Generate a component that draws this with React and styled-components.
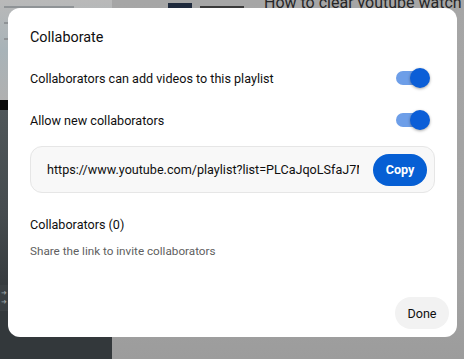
import React from 'react';
import styled, { createGlobalStyle } from 'styled-components';

const GlobalStyle = createGlobalStyle`
	html, body {
		margin: 0;
		padding: 0;
		width: 464px;
		height: 359px;
		overflow: hidden;
		font-family: Roboto, "Liberation Sans", sans-serif;
	}
`;

const Toggle = ({ on }) => (
	<Switch>
		<Track on={on} />
		<Knob on={on} />
	</Switch>
);

const App = () => (
	<Page>
		<GlobalStyle />
		<Sidebar>
			<SideTop>
				<SideLine w={70} />
				<SideLine w={40} />
				<SideLine w={55} />
			</SideTop>
			<SideBand />
			<SideBody />
			<SideFoot>
				<Arrow>➜</Arrow>
				<Arrow>➜</Arrow>
			</SideFoot>
			<SideBottom />
		</Sidebar>
		<Main>
			<MainTop>
				<Thumb />
				<ThumbMeta />
				<VideoTitle>How to clear youtube watch later</VideoTitle>
			</MainTop>
		</Main>

		<Dialog>
			<Title>Collaborate</Title>
			<Row>
				<RowLabel>Collaborators can add videos to this playlist</RowLabel>
				<Toggle on />
			</Row>
			<Row>
				<RowLabel>Allow new collaborators</RowLabel>
				<Toggle on />
			</Row>
			<LinkBox>
				<LinkText>https://www.youtube.com/playlist?list=PLCaJqoLSfaJ7MxQ2</LinkText>
				<CopyButton>Copy</CopyButton>
			</LinkBox>
			<Section>Collaborators (0)</Section>
			<Hint>Share the link to invite collaborators</Hint>
			<Footer>
				<DoneButton>Done</DoneButton>
			</Footer>
		</Dialog>
	</Page>
);

export default App;

const Page = styled.div`
	position: relative;
	display: flex;
	width: 464px;
	height: 359px;
	background: #a4a4a4;
	overflow: hidden;
`;

const Sidebar = styled.div`
	display: flex;
	flex-direction: column;
	width: 112px;
	flex-shrink: 0;
`;

const SideTop = styled.div`
	height: 100px;
	background: linear-gradient(180deg, #b9b9b9 0%, #a8b3b8 50%, #b0b0b0 100%);
	display: flex;
	flex-direction: column;
	gap: 14px;
	padding: 6px 4px;
	box-sizing: border-box;
`;

const SideLine = styled.div`
	height: 2px;
	width: ${props => props.w}px;
	background: #8f9396;
`;

const SideBand = styled.div`
	height: 10px;
	background: #0a0a0a;
`;

const SideBody = styled.div`
	flex: 1;
	background: linear-gradient(180deg, #4f5659 0%, #454b4e 60%, #363b3e 100%);
`;

const SideFoot = styled.div`
	height: 26px;
	background: #3b4043;
	display: flex;
	flex-direction: column;
	justify-content: center;
	padding-left: 1px;
	font-size: 7px;
	line-height: 9px;
	color: #9aa0a3;
`;

const Arrow = styled.span``;

const SideBottom = styled.div`
	height: 48px;
	background: #33383b;
`;

const Main = styled.div`
	flex: 1;
	background: linear-gradient(180deg, #a6a6a6 0%, #a2a2a2 80%, #9c9c9c 100%);
`;

const MainTop = styled.div`
	display: flex;
	align-items: flex-start;
	gap: 8px;
	height: 8px;
	padding-left: 56px;
	overflow: hidden;
`;

const Thumb = styled.div`
	width: 24px;
	height: 8px;
	margin-top: 3px;
	background: #1f2a3d;
`;

const ThumbMeta = styled.div`
	width: 44px;
	height: 2px;
	margin-top: 6px;
	background: #3a3a3a;
`;

const VideoTitle = styled.div`
	margin-left: 12px;
	margin-top: -7px;
	font-size: 16px;
	color: #262626;
	white-space: nowrap;
`;

const Dialog = styled.div`
	position: absolute;
	left: 8px;
	top: 8px;
	width: 449px;
	height: 329px;
	box-sizing: border-box;
	background: #fff;
	border-radius: 12px;
	padding: 20px 22px 8px 22px;
	display: flex;
	flex-direction: column;
	color: #0f0f0f;
`;

const Title = styled.div`
	font-size: 14.4px;
	line-height: 20px;
	margin-bottom: 9px;
`;

const Row = styled.div`
	display: flex;
	align-items: center;
	justify-content: space-between;
	height: 42px;
	padding-right: 5px;
`;

const RowLabel = styled.div`
	font-size: 12.6px;
`;

const Switch = styled.div`
	position: relative;
	width: 34px;
	height: 20px;
`;

const Track = styled.div`
	position: absolute;
	left: 0;
	top: 3px;
	width: 32px;
	height: 14px;
	border-radius: 7px;
	background: ${props => (props.on ? '#6d9ee8' : '#bdbdbd')};
`;

const Knob = styled.div`
	position: absolute;
	top: 0;
	left: ${props => (props.on ? '14px' : '0')};
	width: 20px;
	height: 20px;
	border-radius: 50%;
	background: ${props => (props.on ? '#0b5ed7' : '#f1f1f1')};
	box-shadow: 0 1px 3px rgba(0, 0, 0, 0.35);
`;

const LinkBox = styled.div`
	display: flex;
	align-items: center;
	gap: 14px;
	margin-top: 5px;
	height: 47px;
	box-sizing: border-box;
	padding: 0 7px 0 16px;
	background: #f8f8f8;
	border: 1px solid #e6e6e6;
	border-radius: 12px;
`;

const LinkText = styled.div`
	flex: 1;
	min-width: 0;
	overflow: hidden;
	white-space: nowrap;
	font-size: 12.6px;
	color: #0f0f0f;
`;

const CopyButton = styled.button`
	height: 32px;
	width: 54px;
	flex-shrink: 0;
	padding: 0;
	border: none;
	border-radius: 16px;
	background: #065fd4;
	color: #fff;
	font-family: Roboto, "Liberation Sans", sans-serif;
	font-size: 12.6px;
	font-weight: 700;
`;

const Section = styled.div`
	margin-top: 23px;
	font-size: 12.6px;
	line-height: 18px;
`;

const Hint = styled.div`
	margin-top: 9px;
	font-size: 11.7px;
	line-height: 16px;
	color: #606060;
`;

const Footer = styled.div`
	margin-top: auto;
	display: flex;
	justify-content: flex-end;
	margin-right: -14px;
`;

const DoneButton = styled.button`
	height: 32px;
	width: 54px;
	padding: 0;
	border: none;
	border-radius: 16px;
	background: #f2f2f2;
	color: #0f0f0f;
	font-family: Roboto, "Liberation Sans", sans-serif;
	font-size: 12.6px;
	font-weight: 400;
`;
